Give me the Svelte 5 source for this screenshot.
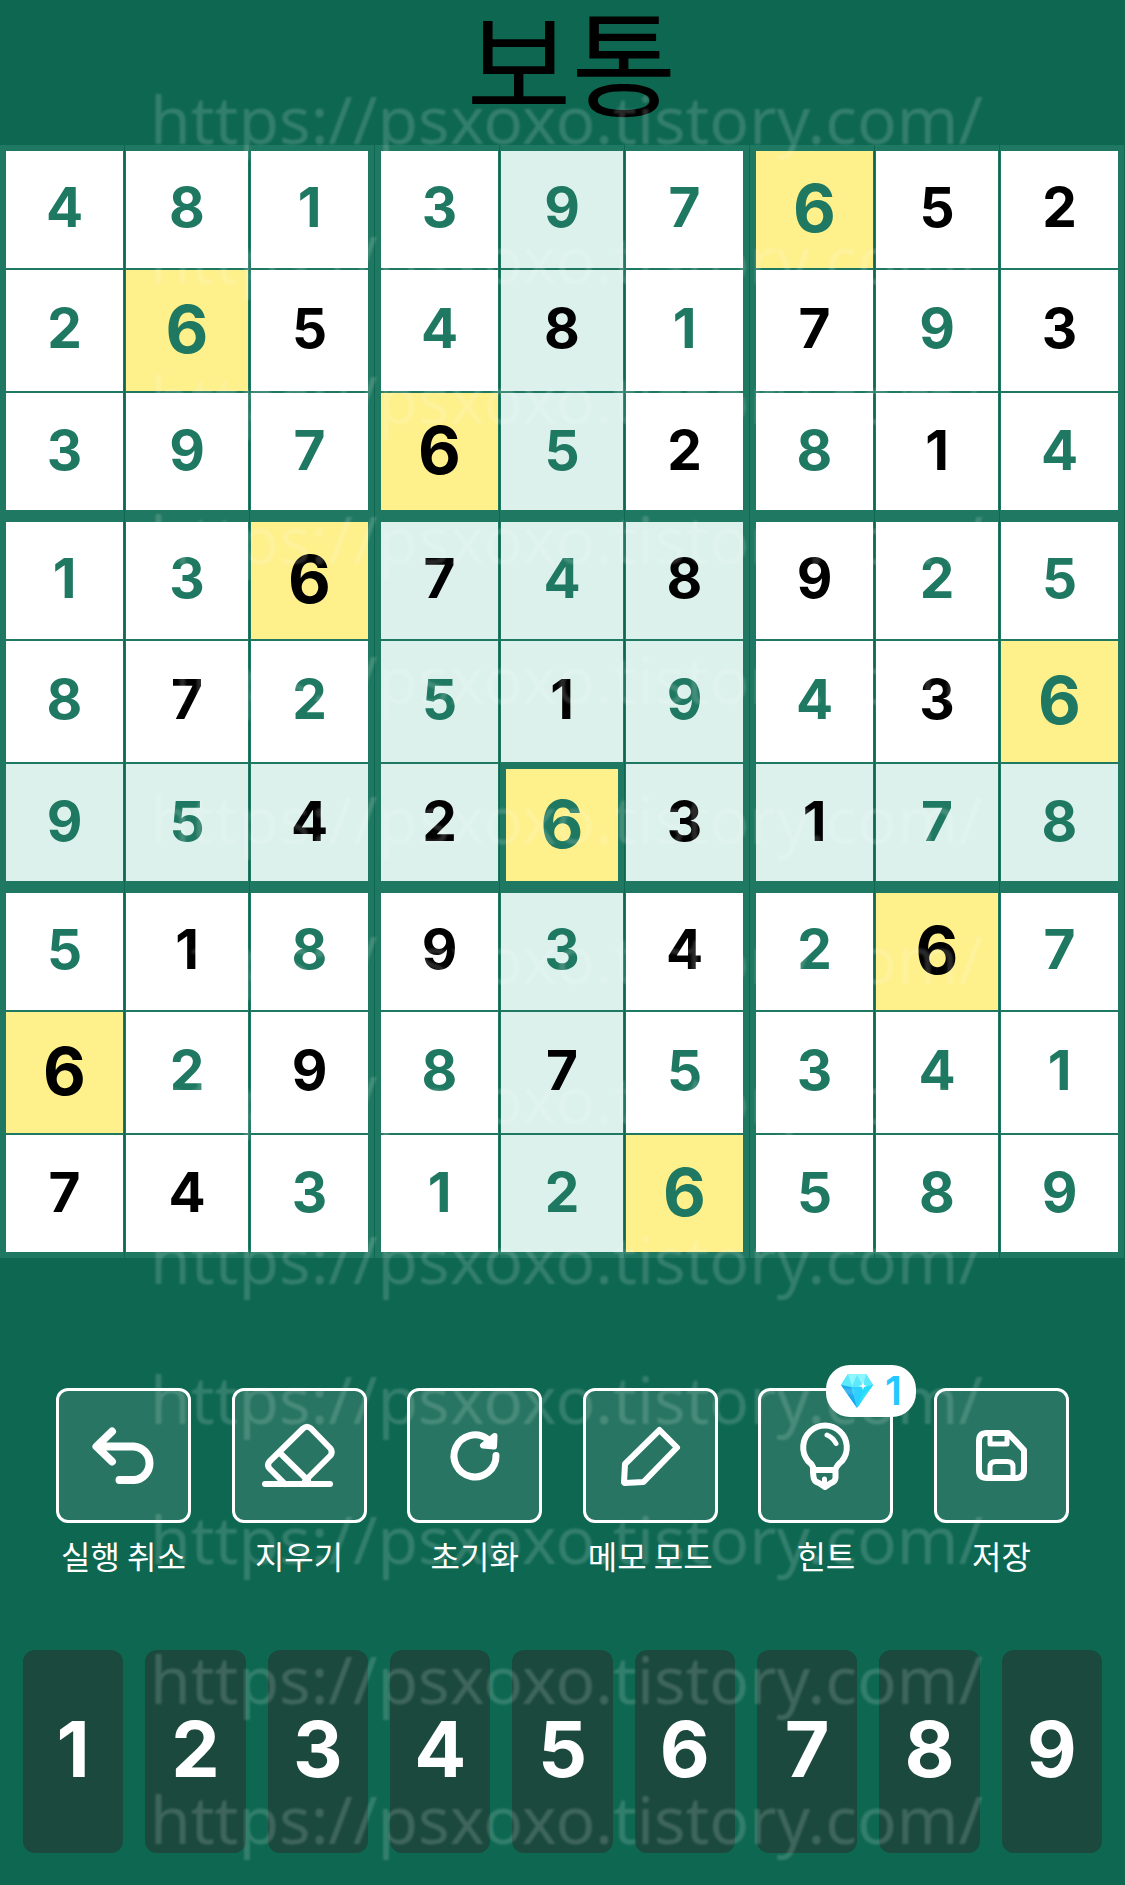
<script>
  // values holds the numbers, givens marks the preset cells with "x"
  const values = [
    "481397652",
    "265481793",
    "397652814",
    "136748925",
    "872519436",
    "954263178",
    "518934267",
    "629875341",
    "743126589",
  ];
  const givens = [
    ".......xx",
    "..x.x.x.x",
    "...x.x.x.",
    "..xx.xx..",
    ".x..x..x.",
    "..xx.xx..",
    ".x.x.x.x.",
    "x.x.x....",
    "xx.......",
  ];

  let selected = $state({ row: 5, col: 4 });
  let selectedValue = $derived(values[selected.row][selected.col]);

  const box = (n) => Math.floor(n / 3);

  function isRelated(row, col) {
    return (
      row === selected.row ||
      col === selected.col ||
      (box(row) === box(selected.row) && box(col) === box(selected.col))
    );
  }

  const tools = [
    { id: "undo", label: "실행 취소" },
    { id: "erase", label: "지우기" },
    { id: "reset", label: "초기화" },
    { id: "memo", label: "메모 모드" },
    { id: "hint", label: "힌트", cost: 1 },
    { id: "save", label: "저장" },
  ];

  const keys = [1, 2, 3, 4, 5, 6, 7, 8, 9];

  const address = "https://psxoxo.tistory.com/";
  const markGroups = [Array(8).fill(address), Array(5).fill(address)];
</script>

<main class="game">
  <h1>보통</h1>

  <div class="board">
    {#each values as line, row}
      {#each line as value, col}
        <button
          class="cell"
          class:given={givens[row][col] === "x"}
          class:related={isRelated(row, col)}
          class:same={value === selectedValue}
          class:selected={row === selected.row && col === selected.col}
          class:edge-left={col % 3 === 0}
          class:edge-right={col % 3 === 2}
          class:edge-top={row % 3 === 0}
          class:edge-bottom={row % 3 === 2}
          onclick={() => (selected = { row, col })}
        >
          {value}
        </button>
      {/each}
    {/each}
  </div>

  <div class="tools">
    {#each tools as tool}
      <div class="tool">
        <button class="tool-button" aria-labelledby="tool-{tool.id}">
          {#if tool.id === "undo"}
            <svg viewBox="0 0 135 135">
              <path class="w8" d="M56 43.5 40.5 58.5 56 73.5M41 58.5H78A16.8 16.8 0 0 1 78 92H63.5" />
            </svg>
          {:else if tool.id === "erase"}
            <svg viewBox="0 0 135 135">
              <path class="w6" d="M53 96 37.5 80.5Q34.5 77 37.5 73.5L71 40.5Q75 37 79 40.5L98.5 60.5Q101 64 98.5 67.5L73 93" />
              <path class="w6" d="M48 65 76 92.5M33 96H98" />
            </svg>
          {:else if tool.id === "reset"}
            <svg viewBox="0 0 135 135">
              <path class="w7" d="M89 67.5A21 21 0 1 1 80.5 51" />
              <path class="w6 fill" d="M87.5 48 76 57.5 87 58.5Z" />
            </svg>
          {:else if tool.id === "memo"}
            <svg viewBox="0 0 135 135">
              <path class="w6" d="M76.5 42 94 59.5 60.5 94 41.5 95 41 94.5 42 76Z" />
            </svg>
          {:else if tool.id === "hint"}
            <svg viewBox="0 0 135 135">
              <path class="w6" d="M55 84V79Q54 76 50 73A21.8 21.8 0 1 1 84 73Q78 78 77.5 82V90Q77 94 73 95L67 99 61 95Q56 94 55.5 89Z" />
              <path class="w6" d="M55 82H77" />
              <path class="w5" d="M66.5 91V97" />
              <path class="w5" d="M69 47Q75 49.5 78 55.5" />
            </svg>
          {:else}
            <svg viewBox="0 0 135 135">
              <path class="w6" d="M52 45H74L90 62V82Q90 90 82 90H53Q45 90 45 82V53Q45 45 53 45" />
              <path class="w5" d="M56 46V56H73V46M56 89V79Q56 73.5 62 73.5H73Q79 73.5 79 79V89" />
            </svg>
          {/if}
        </button>
        <span class="tool-label" id="tool-{tool.id}">{tool.label}</span>
        {#if tool.cost}
          <span class="cost">
            <svg class="gem" viewBox="0 0 32 34">
              <path fill="#2fd0ff" d="M7 0H25L32 11 16 34 0 11Z" />
              <path fill="#8df6ff" d="M7 0H25L32 11 22 13H10L0 11Z" />
              <path fill="#5ee9fb" d="M7 0 11 12 16 1 22 12 25 0 32 11 22 13H10L0 11Z" />
              <path fill="#19a9ee" d="M0 11 10 13 16 34Z" />
              <path fill="#22dcfa" d="M32 11 22 13 16 34Z" />
              <path fill="#fff" d="M22 8 23 11 26 12 23 13 22 16 21 13 18 12 21 11Z" />
            </svg>
            {tool.cost}
          </span>
        {/if}
      </div>
    {/each}
  </div>

  <div class="keys">
    {#each keys as key}
      <button class="key">{key}</button>
    {/each}
  </div>

  <div class="marks" aria-hidden="true">
    {#each markGroups as group}
      <div class="mark-group">
        {#each group as mark}
          <span>{mark}</span>
        {/each}
      </div>
    {/each}
  </div>
</main>

<style>
  :global(body) {
    background: #0d6751;
  }

  .game {
    position: relative;
    overflow: hidden;
    padding-bottom: 32px;
    font-family: Inter, "Noto Sans CJK KR", sans-serif;
  }

  button {
    margin: 0;
    padding: 0;
    font-family: inherit;
    cursor: pointer;
  }

  h1 {
    margin: 0;
    padding-left: 18px;
    height: 145px;
    color: #000;
    font-family: "Noto Sans CJK KR", sans-serif;
    font-size: 114px;
    font-weight: 400;
    line-height: 118px;
    text-align: center;
  }

  .board {
    display: grid;
    box-sizing: border-box;
    grid-template-columns: repeat(9, 1fr);
    grid-template-rows: repeat(9, 1fr);
    column-gap: 1px;
    aspect-ratio: 1125 / 1113;
    padding-right: 1px;
  }

  .cell {
    display: flex;
    align-items: center;
    justify-content: center;
    min-width: 0;
    min-height: 0;
    padding-bottom: 3px;
    border: 1px solid #1f7861;
    border-radius: 0;
    background: #fff;
    color: #1f7861;
    font-size: 55px;
    font-weight: 700;
    line-height: 1;
  }

  .edge-left {
    border-left-width: 6px;
  }

  .edge-right {
    border-right-width: 6px;
  }

  .edge-top {
    border-top-width: 6px;
  }

  .edge-bottom {
    border-bottom-width: 6px;
  }

  .given {
    color: #000;
  }

  .related {
    background: #dcf1eb;
  }

  .same {
    background: #fef08a;
    font-size: 66px;
  }

  .selected {
    border-width: 6px;
  }

  .tools {
    display: flex;
    justify-content: space-between;
    margin-top: 130px;
    padding: 0 56px;
  }

  .tool {
    position: relative;
    display: flex;
    flex-direction: column;
    align-items: center;
    width: 135px;
  }

  .tool-button {
    display: flex;
    box-sizing: border-box;
    width: 135px;
    height: 135px;
    border: 3px solid #fff;
    border-radius: 12px;
    background: #277562;
  }

  .tool-button svg {
    width: 135px;
    height: 135px;
    margin: -3px;
    flex: none;
    fill: none;
    stroke: #fff;
    stroke-linecap: round;
    stroke-linejoin: round;
  }

  .w5 {
    stroke-width: 5;
  }

  .w6 {
    stroke-width: 6;
  }

  .w7 {
    stroke-width: 7;
  }

  .w8 {
    stroke-width: 8;
  }

  .fill {
    fill: #fff;
  }

  .tool-label {
    margin-top: 8px;
    color: #fff;
    font-family: "Noto Sans CJK KR", sans-serif;
    font-size: 32px;
    font-weight: 400;
    line-height: 48px;
    white-space: nowrap;
  }

  .cost {
    position: absolute;
    top: -23px;
    right: -23px;
    display: flex;
    align-items: center;
    justify-content: center;
    gap: 12px;
    width: 90px;
    height: 52px;
    border-radius: 24px;
    background: #fff;
    color: #22c8ff;
    font-size: 40px;
    font-weight: 600;
    line-height: 48px;
  }

  .gem {
    width: 32px;
    height: 34px;
  }

  .keys {
    display: grid;
    grid-template-columns: repeat(9, 1fr);
    gap: 22px;
    margin-top: 71px;
    padding: 0 23px;
  }

  .key {
    height: 203px;
    padding-bottom: 6px;
    border: 0;
    border-radius: 12px;
    background: #1b493d;
    color: #fff;
    font-size: 77px;
    font-weight: 700;
  }

  .marks {
    position: absolute;
    top: 48px;
    left: 150px;
    display: flex;
    flex-direction: column;
    gap: 20px;
    color: rgba(255, 255, 255, 0.16);
    filter: blur(1px);
    font-family: "Noto Sans", sans-serif;
    font-size: 66px;
    line-height: 140px;
    pointer-events: none;
  }

  .mark-group {
    display: flex;
    flex-direction: column;
  }
</style>
